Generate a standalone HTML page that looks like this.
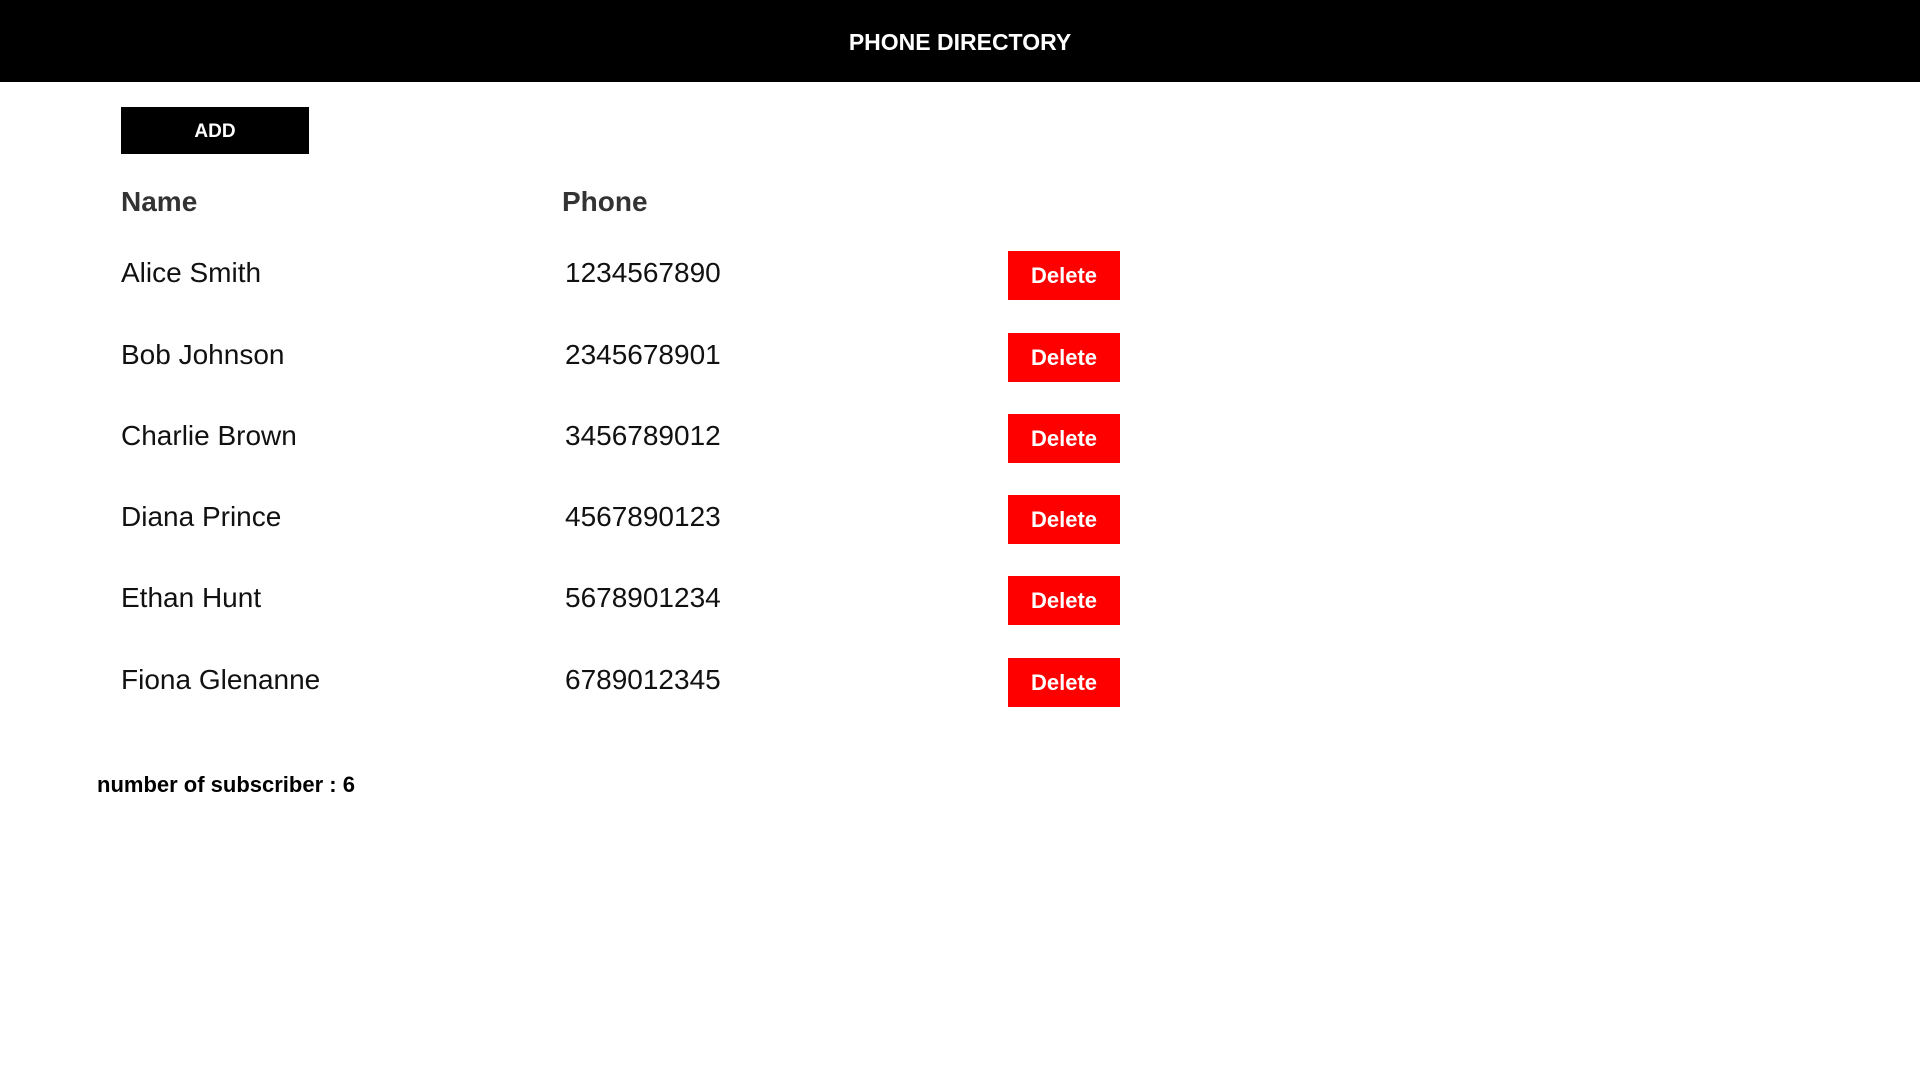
<!DOCTYPE html>
<html><head><meta charset="utf-8"><style>
body{margin:0;width:1920px;height:1080px;background:#fff;font-family:"Liberation Sans",sans-serif;position:relative;overflow:hidden}
.hdr{position:absolute;left:0;top:0;width:1920px;height:82px;background:#000;color:#fff;font-weight:bold;font-size:23px;text-align:center;line-height:84px}
.add{position:absolute;left:121px;top:107px;width:188px;height:47px;background:#000;color:#fff;font-weight:bold;font-size:19px;text-align:center;line-height:49px}
.t{position:absolute;font-size:28px;color:#111;line-height:34px}
.h{font-weight:bold;color:#333}
.del{position:absolute;left:1008px;width:112px;height:49px;background:#f00;color:#fff;font-weight:bold;font-size:22px;text-align:center;line-height:49px}
.foot{position:absolute;left:97px;top:772px;font-weight:bold;font-size:22px;color:#000}
</style></head><body>
<div class="hdr">PHONE DIRECTORY</div>
<div class="add">ADD</div>
<div class="t h" style="left:121px;top:185px">Name</div>
<div class="t h" style="left:562px;top:185px">Phone</div>

<div class="t" style="left:121px;top:256px">Alice Smith</div>
<div class="t" style="left:565px;top:256px">1234567890</div>
<div class="del" style="top:251px">Delete</div>

<div class="t" style="left:121px;top:338px">Bob Johnson</div>
<div class="t" style="left:565px;top:338px">2345678901</div>
<div class="del" style="top:333px">Delete</div>

<div class="t" style="left:121px;top:419px">Charlie Brown</div>
<div class="t" style="left:565px;top:419px">3456789012</div>
<div class="del" style="top:414px">Delete</div>

<div class="t" style="left:121px;top:500px">Diana Prince</div>
<div class="t" style="left:565px;top:500px">4567890123</div>
<div class="del" style="top:495px">Delete</div>

<div class="t" style="left:121px;top:581px">Ethan Hunt</div>
<div class="t" style="left:565px;top:581px">5678901234</div>
<div class="del" style="top:576px">Delete</div>

<div class="t" style="left:121px;top:663px">Fiona Glenanne</div>
<div class="t" style="left:565px;top:663px">6789012345</div>
<div class="del" style="top:658px">Delete</div>

<div class="foot">number of subscriber : 6</div>
</body></html>
